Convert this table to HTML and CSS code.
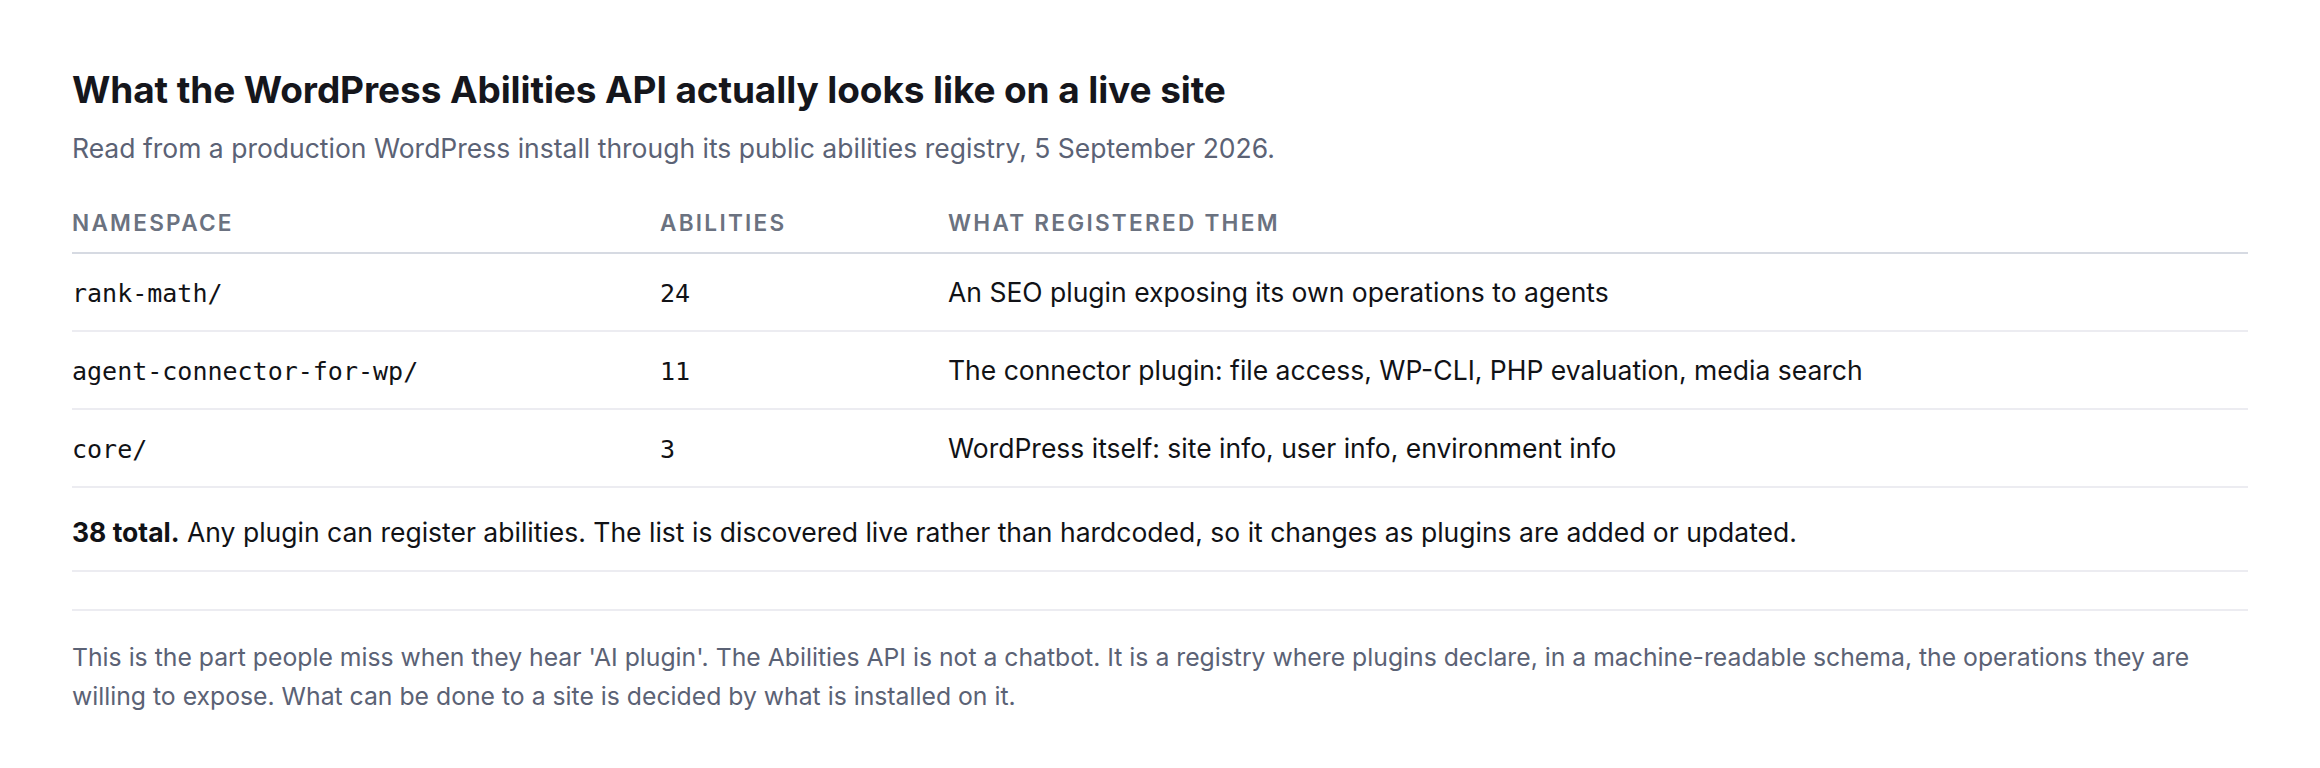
FILE: index.html
```html
<!DOCTYPE html>
<html lang="en">
<head>
<meta charset="utf-8">
<title>WordPress Abilities API</title>
<link rel="stylesheet" href="styles.css">
</head>
<body>
<main class="page">
  <h1 class="title">What the WordPress Abilities API actually looks like on a live site</h1>
  <p class="subtitle">Read from a production WordPress install through its public abilities registry, 5 September 2026.</p>
  <table class="abilities">
    <thead>
      <tr>
        <th class="col-ns">Namespace</th>
        <th class="col-count">Abilities</th>
        <th class="col-what">What registered them</th>
      </tr>
    </thead>
    <tbody>
      <tr>
        <td><code>rank-math/</code></td>
        <td><code>24</code></td>
        <td>An SEO plugin exposing its own operations to agents</td>
      </tr>
      <tr>
        <td><code>agent-connector-for-wp/</code></td>
        <td><code>11</code></td>
        <td>The connector plugin: file access, WP-CLI, PHP evaluation, media search</td>
      </tr>
      <tr>
        <td><code>core/</code></td>
        <td><code>3</code></td>
        <td>WordPress itself: site info, user info, environment info</td>
      </tr>
      <tr class="total">
        <td colspan="3"><strong>38 total.</strong> Any plugin can register abilities. The list is discovered live rather than hardcoded, so it changes as plugins are added or updated.</td>
      </tr>
    </tbody>
  </table>
  <p class="note">This is the part people miss when they hear 'AI plugin'. The Abilities API is not a chatbot. It is a registry where plugins declare, in a machine-readable schema, the operations they are willing to expose. What can be done to a site is decided by what is installed on it.</p>
</main>
</body>
</html>
```
FILE: styles.css
```css
html, body {
  margin: 0;
  padding: 0;
  background: #ffffff;
}
body {
  font-family: Inter, "Noto Sans", sans-serif;
  color: #16171c;
}
.page {
  padding: 67px 72px 40px;
}
.title {
  margin: 0;
  font-size: 37px;
  line-height: 46px;
  font-weight: 700;
  letter-spacing: -0.1px;
  color: #15161c;
}
.subtitle {
  margin: 15px 0 0;
  font-size: 26.5px;
  line-height: 40px;
  color: #5b6275;
}
.abilities {
  width: 100%;
  margin-top: 39px;
  border-collapse: collapse;
  table-layout: fixed;
}
.abilities th {
  text-align: left;
  font-size: 22.6px;
  line-height: 32px;
  font-weight: 600;
  letter-spacing: 0.1em;
  text-transform: uppercase;
  color: #6b7280;
  padding: 0 0 13px;
  border-bottom: 2px solid #d6dae2;
}
.col-ns { width: 588px; }
.col-count { width: 288px; }
.abilities td {
  font-size: 26.5px;
  line-height: 38px;
  padding: 19px 0;
  border-bottom: 2px solid #ececf1;
  vertical-align: middle;
  color: #111216;
}
.abilities code {
  font-family: "DejaVu Sans Mono", monospace;
  font-size: 25px;
  line-height: 1;
}
.total td {
  padding: 25px 0 19px;
}
.note {
  margin: 37px 0 0;
  padding-top: 27px;
  border-top: 2px solid #ececf1;
  font-size: 24.75px;
  line-height: 39px;
  color: #5b6275;
}
```
